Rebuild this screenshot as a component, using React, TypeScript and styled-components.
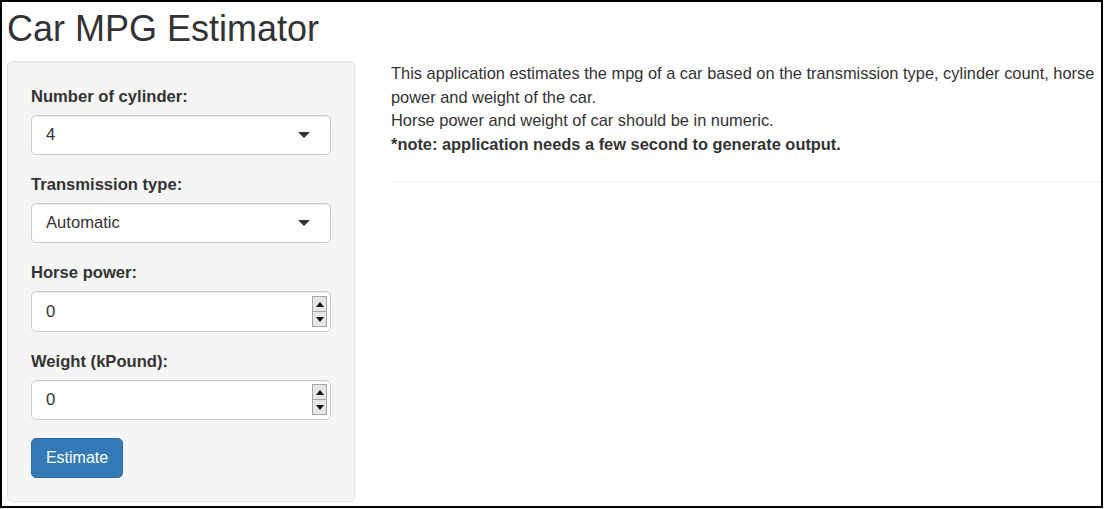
import React from "react";
import styled, { createGlobalStyle } from "styled-components";

const GlobalStyle = createGlobalStyle`
  html, body { margin: 0; padding: 0; background: #fff; }
  body {
    font-family: "Liberation Sans", Arial, Helvetica, sans-serif;
    color: #333;
  }
  * { box-sizing: border-box; }
`;

const Frame = styled.div`
  width: 1103px;
  height: 508px;
  border: 2px solid #000;
  overflow: hidden;
  background: #fff;
`;

const Container = styled.div`
  padding: 0 5px;
`;

const Title = styled.h2`
  font-size: 36px;
  font-weight: 500;
  line-height: 1.1;
  margin: 7px 0 12px;
  color: #333;
`;

const Row = styled.div`
  display: flex;
  gap: 36px;
  align-items: flex-start;
`;

const Well = styled.div`
  width: 348px;
  flex-shrink: 0;
  padding: 23px;
  background: #f5f5f5;
  border: 1px solid #e3e3e3;
  border-radius: 5px;
  box-shadow: inset 0 1px 1px rgba(0, 0, 0, 0.05);
`;

const FormGroup = styled.div`
  margin-bottom: 18px;
`;

const Label = styled.label`
  display: block;
  font-weight: bold;
  font-size: 16.6px;
  line-height: 24px;
  margin-bottom: 6px;
`;

const Field = styled.div`
  display: flex;
  align-items: center;
  height: 40.4px;
  background: #fff;
  border: 1px solid #ccc;
  border-radius: 5px;
  box-shadow: inset 0 1px 1px rgba(0, 0, 0, 0.075);
  padding: 0 3px 0 14px;
  font-size: 16.6px;
  color: #333;
`;

const SelectText = styled.span`
  flex: 1;
`;

const Caret = styled.span`
  width: 0;
  height: 0;
  border-style: solid;
  border-width: 6px 6px 0 6px;
  border-color: #333 transparent transparent transparent;
  margin-right: 17px;
`;

const NumInput = styled.input`
  flex: 1;
  min-width: 0;
  border: 0;
  outline: none;
  background: transparent;
  font: inherit;
  color: #333;
  padding: 0;
  -moz-appearance: textfield;
  &::-webkit-outer-spin-button,
  &::-webkit-inner-spin-button {
    -webkit-appearance: none;
    margin: 0;
  }
`;

const Spinner = styled.div`
  display: flex;
  flex-direction: column;
  width: 15px;
  height: 31px;
  border: 1px solid #a6a6a6;
  background: #e6e6e6;
`;

const SpinHalf = styled.div<{ $down?: boolean }>`
  flex: 1;
  display: flex;
  align-items: center;
  justify-content: center;
  border-top: ${(p) => (p.$down ? "1px solid #a6a6a6" : "0")};
`;

const Tri = styled.span<{ $down?: boolean }>`
  width: 0;
  height: 0;
  border-style: solid;
  border-width: ${(p) => (p.$down ? "5px 4.5px 0 4.5px" : "0 4.5px 5px 4.5px")};
  border-color: ${(p) =>
    p.$down
      ? "#111 transparent transparent transparent"
      : "transparent transparent #111 transparent"};
`;

const Button = styled.button`
  display: inline-flex;
  align-items: center;
  justify-content: center;
  width: 92px;
  height: 40px;
  padding: 0;
  background: #337ab7;
  border: 1px solid #2e6da4;
  border-radius: 5px;
  color: #fff;
  font-family: inherit;
  font-size: 16px;
  cursor: pointer;
`;

const MainCol = styled.div`
  width: 720px;
  flex-shrink: 0;
`;

const Text = styled.div`
  font-size: 16.4px;
  line-height: 23.6px;
  margin-top: 1.5px;
`;

const Rule = styled.hr`
  margin: 25px 0 24px;
  border: 0;
  border-top: 1px solid #eee;
`;

function SelectField({ value }: { value: string }) {
  return (
    <Field>
      <SelectText>{value}</SelectText>
      <Caret />
    </Field>
  );
}

function NumberField({ value }: { value: number }) {
  return (
    <Field>
      <NumInput type="number" defaultValue={value} />
      <Spinner>
        <SpinHalf>
          <Tri />
        </SpinHalf>
        <SpinHalf $down>
          <Tri $down />
        </SpinHalf>
      </Spinner>
    </Field>
  );
}

export default function App() {
  return (
    <>
      <GlobalStyle />
      <Frame>
        <Container>
          <Title>Car MPG Estimator</Title>
          <Row>
            <Well>
              <FormGroup>
                <Label>Number of cylinder:</Label>
                <SelectField value="4" />
              </FormGroup>
              <FormGroup>
                <Label>Transmission type:</Label>
                <SelectField value="Automatic" />
              </FormGroup>
              <FormGroup>
                <Label>Horse power:</Label>
                <NumberField value={0} />
              </FormGroup>
              <FormGroup>
                <Label>Weight (kPound):</Label>
                <NumberField value={0} />
              </FormGroup>
              <Button>Estimate</Button>
            </Well>
            <MainCol>
              <Text>
                This application estimates the mpg of a car based on the
                transmission type, cylinder count, horse power and weight of
                the car.
                <br />
                Horse power and weight of car should be in numeric.
                <br />
                <b>*note: application needs a few second to generate output.</b>
              </Text>
              <Rule />
            </MainCol>
          </Row>
        </Container>
      </Frame>
    </>
  );
}
